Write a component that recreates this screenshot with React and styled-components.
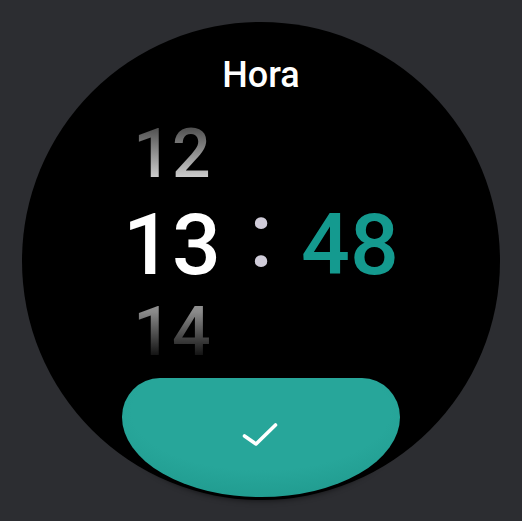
import React from 'react';
import styled, { createGlobalStyle, css } from 'styled-components';

const Global = createGlobalStyle`
  html, body {
    margin: 0;
    padding: 0;
    background: #2c2d31;
  }
  body {
    font-family: Roboto, "Noto Sans", "Liberation Sans", sans-serif;
  }
`;

const Screen = styled.div`
  width: 100vw;
  height: 100vh;
  display: flex;
  align-items: center;
  justify-content: center;
`;

const Watch = styled.div`
  width: 478px;
  height: 478px;
  flex-shrink: 0;
  border-radius: 50%;
  background: #000;
  box-sizing: border-box;
  padding-top: 32px;
  display: flex;
  flex-direction: column;
  align-items: center;
`;

const Title = styled.h1`
  margin: 0;
  font-size: 36px;
  font-weight: 500;
  line-height: 42px;
  color: #ffffff;
`;

const Picker = styled.div`
  margin-top: 13px;
  display: flex;
  align-items: flex-start;
`;

const Column = styled.div`
  width: 120px;
  display: flex;
  flex-direction: column;
  align-items: center;
`;

const tones = {
  prev: css`
    font-size: 68px;
    background: linear-gradient(to bottom, #333 0%, #555 23%, #cdcdcd 76%, #dddddd 100%);
    -webkit-background-clip: text;
    background-clip: text;
    color: transparent;
  `,
  next: css`
    font-size: 68px;
    background: linear-gradient(to bottom, #a0a0a0 0%, #8a8a8a 26%, #000 86%);
    -webkit-background-clip: text;
    background-clip: text;
    color: transparent;
  `,
  current: css`
    font-size: 86px;
    color: #ffffff;
  `,
  accent: css`
    font-size: 86px;
    color: #149a8f;
  `,
};

const Cell = styled.div`
  height: ${(p) => p.$h}px;
  line-height: ${(p) => p.$h}px;
  font-weight: 500;
  white-space: pre;
  ${(p) => tones[p.$tone]}
`;

const Colon = styled.div`
  width: 58px;
  margin-top: 82px;
  font-size: 90px;
  font-weight: 500;
  line-height: 90px;
  height: 90px;
  text-align: center;
  color: #d0ccd9;
`;

const ConfirmButton = styled.button`
  margin-top: 4px;
  width: 278px;
  height: 119px;
  flex-shrink: 0;
  border: none;
  padding: 0 0 5px 0;
  border-radius: 38px 38px 139px 139px / 39px 39px 80px 80px;
  background: radial-gradient(ellipse 75% 80% at 50% 28%, #27a69a 62%, #1f998d 100%);
  box-shadow: 0 3px 6px rgba(0, 0, 0, 0.65);
  display: flex;
  align-items: center;
  justify-content: center;
  cursor: pointer;
`;

const CheckIcon = () => (
  <svg width="36" height="26" viewBox="0 0 36 26" style={{ marginLeft: -2 }}>
    <polyline
      points="2.5,14 14,22 33.5,3"
      fill="none"
      stroke="#ffffff"
      strokeWidth="3.6"
      strokeLinecap="round"
      strokeLinejoin="round"
    />
  </svg>
);

export default function App() {
  return (
    <>
      <Global />
      <Screen>
        <Watch>
          <Title>Hora</Title>
          <Picker>
            <Column>
              <Cell $tone="prev" $h={90}>12</Cell>
              <Cell $tone="current" $h={91}>13</Cell>
              <Cell $tone="next" $h={84}>14</Cell>
            </Column>
            <Colon>:</Colon>
            <Column>
              <Cell $tone="prev" $h={90}> </Cell>
              <Cell $tone="accent" $h={91}>48</Cell>
              <Cell $tone="next" $h={84}> </Cell>
            </Column>
          </Picker>
          <ConfirmButton aria-label="Confirmar">
            <CheckIcon />
          </ConfirmButton>
        </Watch>
      </Screen>
    </>
  );
}
